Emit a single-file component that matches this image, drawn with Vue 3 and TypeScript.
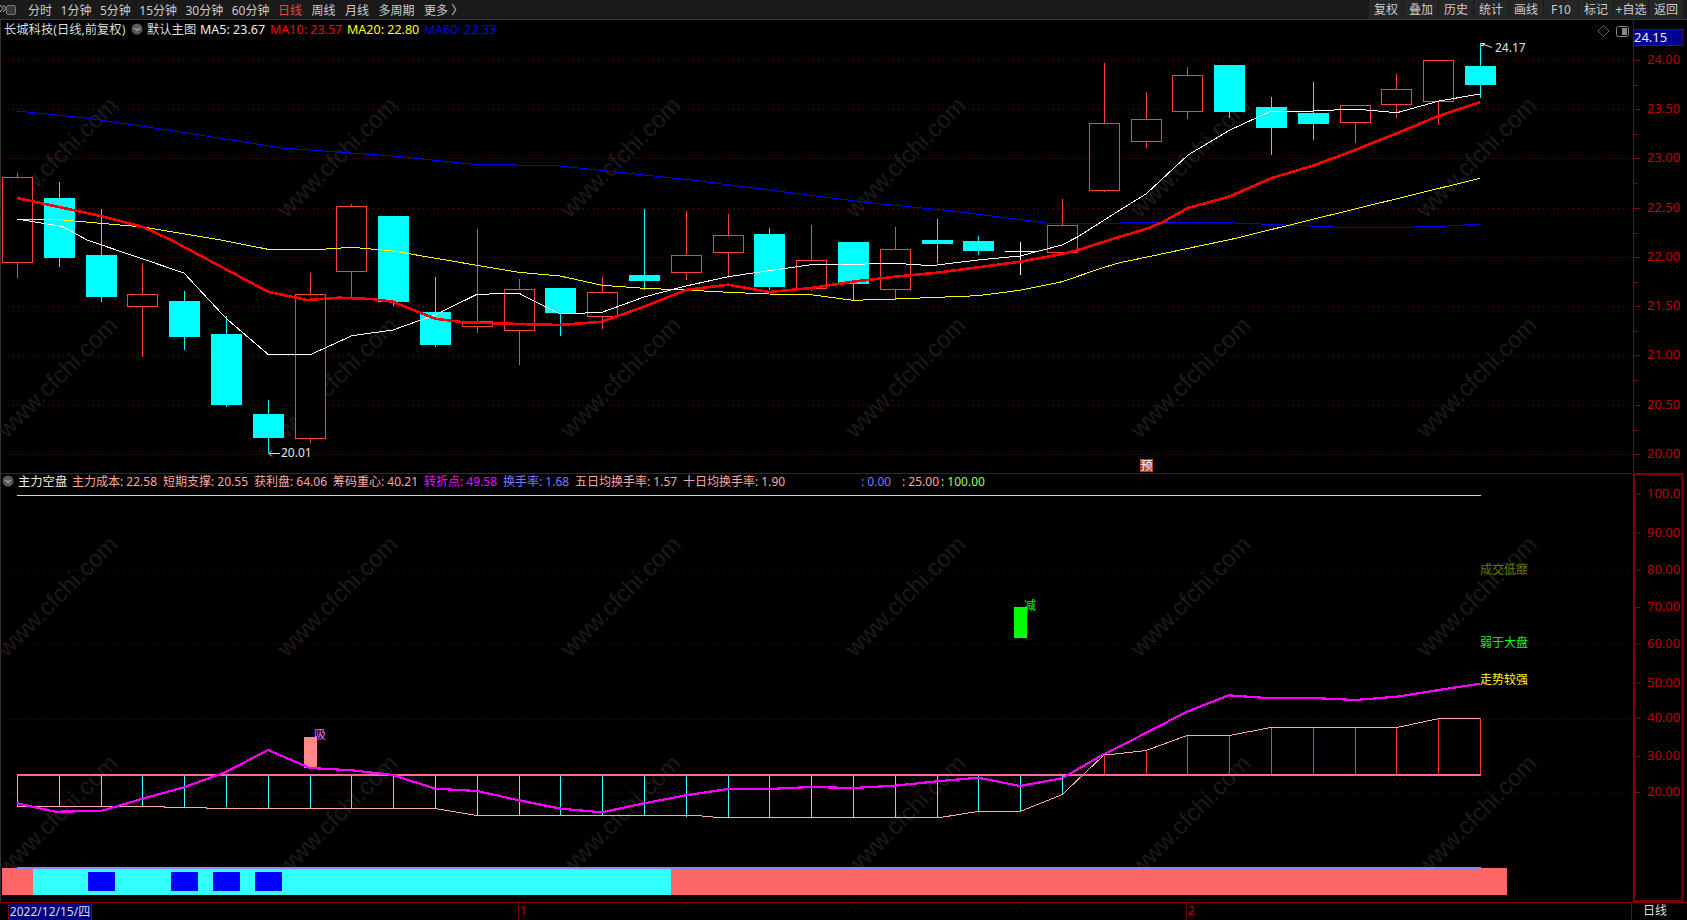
<script setup lang="ts">
type Pt = [number, number]
type Candle = { x: number; up: boolean; wt: number; bt: number; bb: number; wb: number }

const raw: [string, number, number, number, number][] = [
  ['r', 173, 177.5, 262.5, 277.5], ['c', 182, 198, 257.5, 266.5], ['c', 209, 255, 296.5, 301.5], ['r', 263, 294.5, 306.5, 356.5],
  ['c', 291, 301, 337, 350], ['c', 316, 334, 405, 406.5], ['c', 400, 414, 438, 453], ['r', 273, 294.5, 438.5, 443],
  ['r', 204, 206.5, 271.5, 296.5], ['c', 216, 216, 301.5, 305.5], ['c', 277, 312, 344.5, 346.5], ['r', 229, 321.5, 326.5, 332.5],
  ['r', 279, 289.5, 330.5, 365], ['c', 288, 288, 313, 335.5], ['r', 277, 292.5, 316.5, 328.5], ['c', 209, 275, 281, 289.5],
  ['r', 211, 255.5, 272.5, 280], ['r', 214, 235.5, 252.5, 277.5], ['c', 228, 234, 287, 290], ['r', 225, 260.5, 288.5, 291],
  ['c', 242, 242, 284, 300.5], ['r', 227, 249.5, 289.5, 299.5], ['c', 219, 240, 244, 262.5], ['c', 236, 241, 251, 255],
  ['d', 242, 251, 251, 275], ['r', 199, 225.5, 252.5, 252.5], ['r', 63, 123.5, 190.5, 192], ['r', 92, 119.5, 141.5, 147.5],
  ['r', 67, 75.5, 111.5, 118.5], ['c', 65, 65, 111.5, 117.5], ['c', 97, 107, 128, 155], ['c', 82, 113, 124, 140],
  ['r', 105, 105.5, 122.5, 143], ['r', 74, 89.5, 104.5, 117.5], ['r', 60, 60.5, 101.5, 124], ['c', 43, 66, 85, 97.5],
]

const xOf = (i: number) => Math.round(17 + 41.8 * i) + 0.5
const candles: Candle[] = raw
  .map((r, i) => ({ k: r[0], x: xOf(i), up: r[0] === 'r', wt: r[1], bt: r[2], bb: r[3], wb: r[4] }))
  .filter((c) => c.k !== 'd')
const pts = (a: Pt[]) => a.map((p) => p.join(',')).join(' ')

const ma60 = pts([[17, 111], [86, 118], [168, 130], [282, 148], [393, 156], [471, 164], [560, 166], [691, 180], [871, 203], [953, 211], [1046, 223], [1120, 223], [1209, 222], [1261, 224], [1334, 227], [1413, 227], [1448, 226], [1480, 224]])
const ma10 = pts([[17, 198], [101, 216], [143, 227], [171, 240], [268, 291.7], [307, 300], [339, 297.7], [371, 299], [393, 301.7], [435, 318.7], [464, 322.3], [519, 324], [560, 325], [602, 321.7], [644, 306.7], [686, 290], [728, 284.7], [769, 292], [811, 288], [853, 281.7], [895, 276.7], [937, 272.7], [978, 267.3], [1020, 261.7], [1062, 254], [1078, 250], [1120, 236.7], [1146, 229], [1163, 222], [1188, 208], [1229, 196.7], [1271, 178.3], [1313, 165.7], [1355, 150], [1397, 133.3], [1439, 115.7], [1480, 102.3]])
const ma20 = pts([[17, 219], [63, 220], [143, 227], [221, 240], [268, 249.3], [321, 249.3], [352, 247.3], [393, 251], [477, 265.3], [519, 272.3], [560, 276], [602, 285.3], [644, 288.3], [686, 290], [728, 292.3], [769, 294], [811, 294.7], [853, 300.3], [895, 299], [937, 297.3], [978, 295.7], [1020, 290.3], [1062, 281.7], [1104, 267.3], [1120, 262.7], [1234, 238.7], [1480, 178.3]])
const ma5 = pts([[17, 219], [63, 226.7], [87, 240], [184, 273], [226, 318.3], [268, 354.3], [311, 354.3], [352, 335.7], [393, 330], [435, 315], [477, 294.3], [519, 293.3], [560, 314], [602, 312.3], [644, 297], [686, 286], [728, 276.7], [769, 270.7], [811, 264.7], [853, 264.3], [895, 263.3], [931, 265.7], [978, 260], [1020, 256], [1062, 245], [1078, 236.7], [1120, 210], [1146, 194], [1188, 155], [1229, 130.5], [1271, 111], [1313, 111], [1355, 109], [1397, 112.7], [1439, 101], [1480, 94]])

const pale = pts([[17, 806.5], [164, 806.5], [165, 807.5], [206, 807.5], [207, 808.5], [435, 808.5], [477, 815.5], [697, 815.5], [718, 817.5], [940, 817.5], [978, 811.5], [1020, 811.5], [1062, 794.7], [1104, 755], [1120, 753.5], [1146, 750.5], [1187, 735.5], [1229, 735.5], [1271, 727.5], [1397, 727.5], [1439, 718.5], [1480, 718.5]])
const magenta = pts([[17, 803.3], [55, 811.7], [101, 811], [144, 798.3], [184, 787.3], [226, 772], [268, 750], [310, 768], [352, 770.3], [393, 775], [435, 788.7], [477, 791], [519, 800.3], [561, 808.7], [602, 812.3], [644, 803.3], [686, 795.3], [728, 789], [769, 789], [811, 787], [853, 788], [895, 785.7], [937, 781.3], [978, 777.7], [1020, 786], [1062, 778.3], [1104, 754], [1127, 742.7], [1187, 711.7], [1229, 695.3], [1271, 698.3], [1313, 698], [1355, 700], [1397, 696.7], [1439, 690], [1480, 683.7]])

const paleY = [806, 806, 806, 806, 807, 807, 808, 808, 808, 808, 808, 815, 815, 815, 815, 815, 817, 817, 817, 817, 817, 817, 817, 811, 811, 795, 755, 750, 735, 735, 727, 727, 727, 727, 718, 718]
const bars = paleY.map((y, i) => ({ x: xOf(i), y, red: i >= 26 }))

const mainGrid = [60.5, 109.5, 158.5, 208.5, 257.5, 306.5, 355.5, 405.5, 454.5]
const mainLabels = ['24.00', '23.50', '23.00', '22.50', '22.00', '21.50', '21.00', '20.50', '20.00']
const minorMain = [85, 134, 183, 233, 282, 331, 380, 430]
const subGrid = [570.5, 644.5, 719.5, 793.5]
const subLabels: [string, number][] = [['100.0', 494], ['90.00', 533], ['80.00', 570], ['70.00', 607.5], ['60.00', 644], ['50.00', 683], ['40.00', 718], ['30.00', 756.5], ['20.00', 792.5]]
const wmX = [57, 337, 620, 905, 1190, 1476]
const blocks = [[88, 27], [171, 27], [213, 27], [255, 27]]

const periods = ['分时', '1分钟', '5分钟', '15分钟', '30分钟', '60分钟', '日线', '周线', '月线', '多周期', '更多 〉']
const actions = ['复权', '叠加', '历史', '统计', '画线', 'F10', '标记', '+自选', '返回']
const subLegend = [
  { t: '主力成本: 22.58', c: 'salmon', w: 91 }, { t: '短期支撑: 20.55', c: 'salmon', w: 91 }, { t: '获利盘: 64.06', c: 'salmon', w: 79 },
  { t: '筹码重心: 40.21', c: 'salmon', w: 91 }, { t: '转折点: 49.58', c: 'mag', w: 79 }, { t: '换手率: 1.68', c: 'violet', w: 72 },
  { t: '五日均换手率: 1.57', c: 'salmon', w: 108 }, { t: '十日均换手率: 1.90', c: 'salmon', w: 178 },
  { t: ': 0.00', c: 'violet', w: 41 }, { t: ': 25.00', c: 'salmon', w: 39 }, { t: ': 100.00', c: 'lime', w: 60 },
]
</script>

<template>
  <div class="app">
    <header class="toolbar">
      <svg class="tool-icon" width="17" height="16" viewBox="0 0 17 16">
        <path d="M0 3l3 3.500-3 3.500M3 3l3 3.500-3 3.500" fill="none" stroke="#bbb" />
        <rect x="6.500" y="3.500" width="9" height="9" rx="1.500" fill="#3a3a3a" stroke="#777" />
      </svg>
      <nav class="periods">
        <span v-for="p in periods" :key="p" :class="{ active: p === '日线' }">{{ p }}</span>
      </nav>
      <nav class="actions">
        <span v-for="a in actions" :key="a">{{ a }}</span>
      </nav>
    </header>

    <section class="panel main-panel">
      <svg class="plot" width="1632" height="453" viewBox="0 20 1632 453">
        <text v-for="x in wmX" :key="x" class="wm" :transform="`translate(${x} 157) rotate(-45)`">www.cfchi.com</text>
        <text v-for="x in wmX" :key="'b' + x" class="wm" :transform="`translate(${x} 377) rotate(-45)`">www.cfchi.com</text>
        <line v-for="y in mainGrid" :key="y" class="grid" x1="3" x2="1632" :y1="y" :y2="y" />
        <g v-for="c in candles" :key="c.x" shape-rendering="crispEdges">
          <line :class="c.up ? 'wick-up' : 'wick-down'" :x1="c.x" :x2="c.x" :y1="c.wt" :y2="c.wb" />
          <rect v-if="c.up" class="body-up" :x="c.x - 15" :y="c.bt" width="30" :height="c.bb - c.bt" />
          <rect v-else class="body-down" :x="c.x - 15.5" :y="c.bt" width="31" :height="c.bb - c.bt" />
        </g>
        <g shape-rendering="crispEdges">
          <line class="doji" x1="1020.500" x2="1020.500" y1="242" y2="275" />
          <line class="doji" x1="1005" x2="1036" y1="251.500" y2="251.500" />
        </g>
        <polyline class="ma m60" :points="ma60" />
        <polyline class="ma m20" :points="ma20" />
        <polyline class="ma m5" :points="ma5" />
        <polyline class="ma m10" :points="ma10" />
        <path class="note-line" d="M1481 43.500l11 4M1481 43.500h4M1481 45.500h3" />
        <text class="note" x="1495" y="47.500">24.17</text>
        <path class="note-line" d="M269 453.500h11M269 453.500l3-3M269 453.500l3 3" />
        <text class="note" x="281" y="452.500">20.01</text>
        <rect class="pre-bg" x="1140" y="459" width="13" height="13" />
        <text class="pre" x="1146.500" y="465">预</text>
        <path class="diamond" d="M1603.500 25.500l5.500 5.500-5.500 5.500-5.500-5.500z" />
        <rect class="tile" x="1616.500" y="26.500" width="12" height="10" rx="2" />
        <rect class="tile-fill" x="1622" y="28" width="5" height="7" />
      </svg>
      <svg class="axis" width="55" height="453" viewBox="1632 20 55 453">
        <rect class="price-box" x="1632" y="29.500" width="50" height="16" />
        <text class="price-now" x="1633" y="37">24.15</text>
        <line class="axis-line" x1="1632.500" x2="1632.500" y1="20" y2="473" />
        <g v-for="(y, i) in mainGrid" :key="y">
          <line class="axis-line" x1="1632" x2="1639" :y1="y" :y2="y" />
          <text class="axis-text" x="1646" :y="y - 2">{{ mainLabels[i] }}</text>
        </g>
        <line v-for="y in minorMain" :key="y" class="axis-line" x1="1632" x2="1636" :y1="y + 0.5" :y2="y + 0.5" />
      </svg>
      <div class="legend main-legend">
        <span class="name title">长城科技(日线,前复权)</span>
        <svg class="chev" width="12" height="12" viewBox="0 0 12 12">
          <circle cx="6" cy="6" r="5.500" fill="#5a5a5a" />
          <path d="M3.500 5l2.500 2.500 2.500-2.500" fill="none" stroke="#ddd" />
        </svg>
        <span class="name default">默认主图</span>
        <span class="ma-label w">MA5: 23.67</span>
        <span class="ma-label r">MA10: 23.57</span>
        <span class="ma-label y">MA20: 22.80</span>
        <span class="ma-label b">MA60: 22.33</span>
      </div>
    </section>

    <section class="panel sub-panel">
      <svg class="plot" width="1632" height="429" viewBox="0 473 1632 429">
        <text v-for="x in wmX" :key="x" class="wm" :transform="`translate(${x} 596) rotate(-45)`">www.cfchi.com</text>
        <text v-for="x in wmX" :key="'b' + x" class="wm" :transform="`translate(${x} 815) rotate(-45)`">www.cfchi.com</text>
        <line class="axis-line" x1="0" x2="1632" y1="473.500" y2="473.500" />
        <line v-for="y in subGrid" :key="y" class="grid dim" x1="3" x2="1632" :y1="y" :y2="y" />
        <line class="hundred" x1="17" x2="1481" y1="495.500" y2="495.500" />
        <g shape-rendering="crispEdges">
          <line v-for="b in bars" :key="b.x" :class="b.red ? 'bar-red' : 'bar-cyan'" :x1="b.x" :x2="b.x" :y1="b.y" y2="775" />
        </g>
        <polyline class="pale" :points="pale" />
        <rect class="base" x="17" y="774" width="1464" height="2" />
        <rect class="buy" x="304" y="737" width="13" height="31" />
        <text class="tag buy-t" x="314" y="734.500">吸</text>
        <rect class="sell" x="1014" y="607" width="13" height="31" />
        <text class="tag sell-t" x="1024" y="605.500">减</text>
        <polyline class="mag" :points="magenta" />
        <text class="tag olive" x="1480" y="569">成交低靡</text>
        <text class="tag green" x="1480" y="642.500">弱于大盘</text>
        <text class="tag yellow" x="1480" y="679">走势较强</text>
        <rect class="strip-r" x="2" y="868" width="31" height="27" />
        <rect class="strip-c" x="33" y="868" width="638" height="27" />
        <rect class="strip-r" x="671" y="868" width="836" height="27" />
        <rect v-for="b in blocks" :key="b[0]" class="strip-b" :x="b[0]" y="872" :width="b[1]" height="19" />
        <rect class="strip-line" x="17" y="867" width="1464" height="2" />
      </svg>
      <svg class="axis" width="55" height="429" viewBox="1632 473 55 429">
        <rect class="axis-frame" x="1633" y="474" width="48.500" height="427" />
        <g v-for="l in subLabels" :key="l[0]">
          <line class="axis-line" x1="1632" x2="1639" :y1="l[1]" :y2="l[1]" />
          <text class="axis-text" x="1646" :y="l[1] - 1.5">{{ l[0] }}</text>
        </g>
      </svg>
      <div class="legend sub-legend">
        <svg class="chev first" width="12" height="12" viewBox="0 0 12 12">
          <circle cx="6" cy="6" r="5.500" fill="#5a5a5a" />
          <path d="M3.500 5l2.500 2.500 2.500-2.500" fill="none" stroke="#ddd" />
        </svg>
        <span class="name sub-name">主力空盘</span>
        <span v-for="l in subLegend" :key="l.t" :class="l.c" :style="{ width: l.w + 'px' }">{{ l.t }}</span>
      </div>
    </section>

    <footer class="timebar">
      <div class="dates">
        <span class="date">2022/12/15/四</span>
        <span class="tick tick-1">1</span>
        <span class="tick tick-2">2</span>
        <i class="mini" style="left: 685px"></i>
        <i class="mini" style="left: 852px"></i>
        <i class="mini" style="left: 1019px"></i>
      </div>
      <span class="cycle">日线</span>
    </footer>
  </div>
</template>

<style scoped>
.app {
  width: 1687px;
  height: 920px;
  background: #000;
  display: flex;
  flex-direction: column;
  overflow: hidden;
  font-family: "Noto Sans", "Noto Sans CJK SC", sans-serif;
  font-size: 12px;
  color: #ddd;
}
.toolbar {
  height: 20px;
  box-sizing: border-box;
  flex: none;
  display: flex;
  align-items: center;
  background: #1a1a1a;
  border-bottom: 1px solid #3a3a3a;
  color: #ccc;
}
.tool-icon { flex: none; margin-right: 11px; }
.periods { display: flex; gap: 8.5px; white-space: nowrap; }
.periods span:nth-child(n+8) { margin-left: 1px; }
.active { color: #f04040; }
.actions { margin-left: auto; margin-right: 4px; display: flex; gap: 1px; height: 100%; }
.actions span {
  width: 34px;
  background: #262626;
  text-align: center;
  line-height: 19px;
  white-space: nowrap;
}
.panel {
  position: relative;
  flex: none;
  display: grid;
  grid-template-columns: 1632px 55px;
  border-left: 1px solid #333;
}
.main-panel { height: 453px; }
.sub-panel { height: 429px; }
.plot, .axis { display: block; }
.plot { margin-left: -1px; }
.legend {
  position: absolute;
  left: 0;
  display: flex;
  align-items: center;
  white-space: nowrap;
  height: 18px;
}
.main-legend { top: 0; padding-left: 3px; }
.sub-legend { top: -1px; padding-left: 0; }
.chev { margin: 0 4px 0 1px; flex: none; }
.chev.first { margin: 0 4px 0 1px; }
.name { color: #ddd; font-size: 12.3px; }
.title { width: 126px; }
.default { width: 53px; }
.ma-label { font-size: 12.5px; width: 77px; }
.ma-label.w { color: #eee; width: 70px; }
.ma-label.r { color: #f00; }
.ma-label.y { color: #ff0; }
.ma-label.b { color: #0000f0; }
.sub-name { width: 54px; color: #eee; }
.salmon { color: #ffa8a0; }
.mag { color: #ff00ff; }
.violet { color: #7c7cff; }
.lime { color: #99ff66; }

.wm {
  fill: #1b1b1b;
  font-family: "Liberation Sans", sans-serif;
  font-size: 24px;
  text-anchor: middle;
  dominant-baseline: central;
}
.grid { stroke: #800000; stroke-dasharray: 1 4; }
.grid.dim { stroke: #6a0000; }
.wick-up { stroke: #ff4040; }
.wick-down { stroke: #00ffff; }
.body-up { fill: #000; stroke: #ff4040; }
.body-down { fill: #00ffff; }
.doji { stroke: #fff; }
.ma { fill: none; stroke-linejoin: round; shape-rendering: crispEdges; }
.m60 { stroke: #0000ff; stroke-width: 1; }
.m20 { stroke: #ffff00; stroke-width: 1; }
.m5 { stroke: #fff; stroke-width: 1; }
.m10 { stroke: #ff0000; stroke-width: 2.6; }
.note-line { fill: none; stroke: #ddd; }
.note { fill: #e4e4e4; font-size: 12px; dominant-baseline: central; }
.pre-bg { fill: #b8460c; }
.pre { fill: #fff; font-size: 12px; text-anchor: middle; dominant-baseline: central; }
.diamond { fill: none; stroke: #666; }
.tile { fill: none; stroke: #888; }
.tile-fill { fill: #888; }
.price-box { fill: #000090; stroke: #800000; }
.price-now { fill: #eee; font-size: 13px; dominant-baseline: central; }
.axis-line { stroke: #8b0000; }
.axis-text { fill: #c00000; font-size: 13px; dominant-baseline: central; }
.axis-frame { fill: none; stroke: #800000; stroke-width: 2; }
.hundred { stroke: #99ff99; }
.bar-cyan { stroke: #33ffff; }
.bar-red { stroke: #ff3333; }
.pale { fill: none; stroke: #ffaaaa; shape-rendering: crispEdges; }
.base { fill: #ff6699; }
.buy { fill: #ff8888; }
.sell { fill: #00ff00; }
.tag { font-size: 12px; dominant-baseline: central; }
.buy-t { fill: #e070ff; }
.sell-t { fill: #00ff00; }
.olive { fill: #687a00; }
.green { fill: #00ff00; }
.yellow { fill: #ffff00; }
polyline.mag { fill: none; stroke: #ff00ff; stroke-width: 2.2; shape-rendering: crispEdges; }
.strip-r { fill: #ff6666; }
.strip-c { fill: #33ffff; }
.strip-b { fill: #0000ff; }
.strip-line { fill: #8888ff; }

.timebar {
  flex: 1;
  display: flex;
  border-top: 1px solid #800000;
  border-bottom: 1px solid #333;
  box-sizing: border-box;
}
.dates { position: relative; width: 1632px; border-right: 1px solid #800000; box-sizing: border-box; }
.date {
  display: inline-block;
  margin-left: 8px;
  width: 84px;
  box-sizing: border-box;
  text-align: center;
  height: 16px;
  line-height: 15px;
  background: #000080;
  color: #ddd;
  border-left: 1px solid #800000;
  border-right: 1px solid #800000;
}
.tick {
  position: absolute;
  top: 0;
  height: 16px;
  line-height: 16px;
  padding-left: 1px;
  color: #c00000;
  border-left: 1px solid #800000;
}
.tick-1 { left: 518px; }
.tick-2 { left: 1186px; }
.mini { position: absolute; top: 0; width: 1px; height: 2px; background: #800000; }
.cycle { width: 55px; padding-left: 11px; box-sizing: border-box; line-height: 16px; color: #ddd; }
</style>
